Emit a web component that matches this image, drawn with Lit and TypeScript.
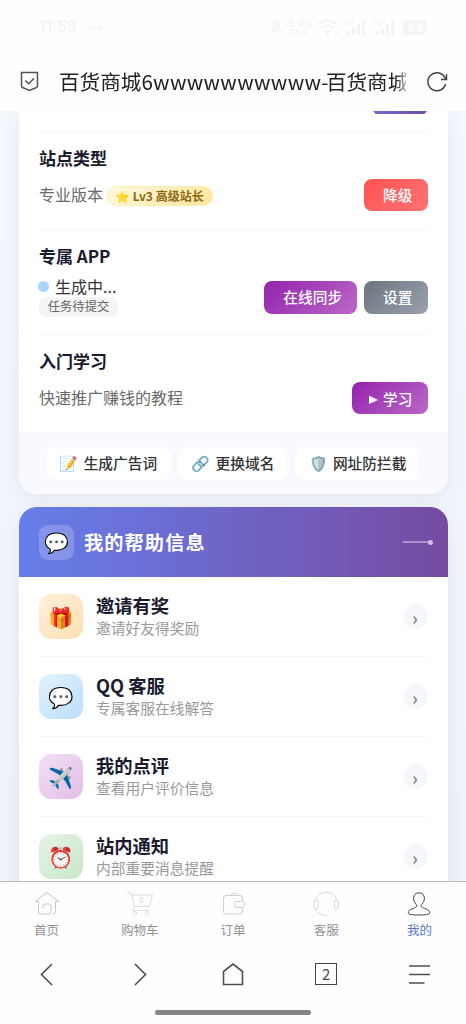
import { LitElement, html, svg, css } from "lit";
import { customElement, property } from "lit/decorators.js";

interface HelpItem {
  icon: string;
  tone: string;
  title: string;
  desc: string;
}

const helpItems: HelpItem[] = [
  { icon: "🎁", tone: "orange", title: "邀请有奖", desc: "邀请好友得奖励" },
  { icon: "💬", tone: "blue", title: "QQ 客服", desc: "专属客服在线解答" },
  { icon: "✈️", tone: "purple", title: "我的点评", desc: "查看用户评价信息" },
  { icon: "⏰", tone: "green", title: "站内通知", desc: "内部重要消息提醒" },
];

const tabs = [
  {
    label: "首页",
    cls: "home",
    art: svg`<path d="M4.500 10.500H1.200L13 1.500l11.800 9h-3.300M4.500 10.500v10q0 2.500 2.500 2.500h7.500q2.500 0 2.500-2.500v-5q0-2.500-2.500-2.500h-3q-2.500 0-2.500 2.500v1.500M21.500 10.500V20q0 2.700-2.200 3"/>`,
  },
  {
    label: "购物车",
    cls: "cart",
    art: svg`<path d="M0 1.500h3.200q1.200 0 1.500 1.500l2.500 12.500h15.500L25.500 4H5M7.200 15.500 5.500 19.500h17M13 6.500h2.500v5H13zM13.500 13.500h1.500"/><circle cx="8" cy="22.300" r="1.700"/><circle cx="20" cy="22.300" r="1.700"/>`,
  },
  {
    label: "订单",
    cls: "order",
    art: svg`<path d="M22.500 10.500V7q0-2.500-2.500-2.500H6Q3.500 4.500 3.500 7v13.500Q3.500 23 6 23h14q2.500 0 2.500-2.500V16.500M10 4.500l3-1.900q1.500-.8 3 0l2.500 1.900M15 10.500h7.500l2 1.500v3l-2 1.500H15z"/>`,
  },
  {
    label: "客服",
    cls: "service",
    art: svg`<path d="M2.500 9.500C4 4 8 1.200 13.300 1.200S22.500 4 24 9.500M2.500 17.500c1.500 4.700 6 7.200 12 6.800"/><rect x="1" y="9" width="4" height="9" rx="2"/><rect x="21.500" y="9" width="4" height="9" rx="2"/>`,
  },
  {
    label: "我的",
    cls: "mine",
    art: svg`<path d="M13 1.800C9.500 1.800 7.600 4.300 7.600 7.200c0 2.500 1 4.700 2.700 6.200 1.400 1.300.8 2.300-.8 3.100-2.700 1.300-7.200 2.100-7.200 5.300 0 1.600 4 2.200 10.700 2.200s10.700-.6 10.700-2.200c0-3.200-4.500-4-7.200-5.300-1.600-.8-2.200-1.800-.8-3.100 1.700-1.500 2.700-3.700 2.700-6.200 0-2.900-1.900-5.400-5.400-5.400z"/>`,
  },
];

const fontStack = css`"Noto Sans CJK SC", "Noto Sans", "Noto Color Emoji", sans-serif`;

@customElement("help-row")
class HelpRow extends LitElement {
  @property({ attribute: false }) item!: HelpItem;

  static styles = css`
    :host {
      display: block;
      margin: 0 20px;
    }
    .row {
      display: flex;
      align-items: center;
      height: 79px;
      border-bottom: 1px solid #f7f7f9;
    }
    .icon {
      width: 44px;
      height: 45px;
      border-radius: 12px;
      display: grid;
      place-items: center;
      font-size: 20.500px;
      line-height: 1;
      margin-right: 13px;
    }
    .orange { background: linear-gradient(135deg, #fff0dc, #ffe0b2); }
    .blue { background: linear-gradient(135deg, #e3f2fd, #bbdefb); }
    .purple { background: linear-gradient(135deg, #f3e0f5, #e1bee7); }
    .green { background: linear-gradient(135deg, #e6f4e7, #c8e6c9); }
    .text { flex: 1; padding-bottom: 1px; }
    .title {
      font-size: 18.300px;
      font-weight: 600;
      line-height: 23px;
      color: #1a1a2e;
    }
    .desc {
      font-size: 14.750px;
      line-height: 21px;
      color: #999;
    }
    .go {
      width: 25px;
      height: 25px;
      border-radius: 50%;
      background: #f5f7fa;
      display: grid;
      place-items: center;
      color: #8c8c92;
      font-size: 18px;
      line-height: 24px;
      font-weight: 700;
    }
  `;

  render() {
    const { icon, tone, title, desc } = this.item;
    return html`
      <div class="row">
        <div class="icon ${tone}">${icon}</div>
        <div class="text">
          <div class="title">${title}</div>
          <div class="desc">${desc}</div>
        </div>
        <div class="go">›</div>
      </div>
    `;
  }
}

@customElement("app-root")
class AppRoot extends LitElement {
  static styles = css`
    :host {
      display: flex;
      flex-direction: column;
      width: 466px;
      height: 1024px;
      overflow: hidden;
      background: #fefefe;
      font-family: ${fontStack};
      color: #333;
    }
    * { box-sizing: border-box; }
    svg { display: block; fill: none; }
    .status {
      height: 52px;
      padding: 2px 36px 0 39px;
      display: flex;
      align-items: center;
      color: #f4f4f4;
      font: 600 15.500px/20px "Inter", sans-serif;
    }
    .status .dots { font-size: 9px; margin-left: 12px; flex: 1; }
    .status svg { fill: currentColor; }
    .address {
      height: 59px;
      padding: 0 18px 0 20px;
      display: flex;
      align-items: center;
      color: #222;
    }
    .url {
      margin-left: 20px;
      width: 347px;
      font-size: 20.600px;
      line-height: 30px;
      padding-bottom: 1px;
      white-space: nowrap;
      overflow: hidden;
      margin-right: 19.500px;
      -webkit-mask-image: linear-gradient(90deg, #000 97%, rgba(0, 0, 0, 0.3));
    }
    .url .latin { letter-spacing: 0.300px; }
    .url .dash { letter-spacing: -2.500px; }
    .page {
      height: 770px;
      overflow: hidden;
      padding: 0 18.500px 0 19px;
      background: linear-gradient(180deg, #f4f7fc, #eff2f8);
      display: flex;
      flex-direction: column;
      gap: 13px;
    }
    .card {
      flex: none;
      background: #fff;
      overflow: hidden;
      box-shadow: 0 4px 20px rgba(30, 40, 70, 0.06);
    }
    .site { border-radius: 0 0 18px 18px; height: 383px; }
    .help { border-radius: 18px 18px 0 0; height: 500px; }
    .line {
      margin: 0 20px;
      border-bottom: 1px solid #f7f7f9;
      display: flex;
      flex-direction: column;
    }
    .first { height: 21px; align-items: flex-end; }
    .clip { height: 3px; overflow: hidden; }
    .clip .btn { margin-top: -29px; width: 55.500px; }
    .kind { height: 98px; padding-top: 13px; }
    .app { height: 105px; padding-top: 13px; }
    .learn { height: 97px; padding-top: 13px; border: 0; }
    .name {
      font-size: 17px;
      line-height: 26px;
      font-weight: 600;
      color: #1a1a2e;
    }
    .body {
      display: flex;
      align-items: center;
      justify-content: space-between;
    }
    .kind .body { height: 32px; margin-top: 8px; }
    .app .body { height: 43px; margin-top: 7px; }
    .learn .body { height: 32px; margin-top: 8px; }
    .desc {
      font-size: 16px;
      line-height: 24px;
      padding-bottom: 2px;
      color: #6a6a6a;
      display: flex;
      align-items: center;
    }
    .badge {
      height: 20px;
      margin: 3px 0 0 4px;
      padding: 0 8px 0 7px;
      border-radius: 10px;
      border: 1px solid #ffecb3;
      background: linear-gradient(135deg, #fff8e1, #ffe69a);
      color: #8b6914;
      font-size: 12px;
      font-weight: 600;
      line-height: 17px;
      white-space: pre;
    }
    .facts { padding-bottom: 3px; }
    .state {
      display: flex;
      align-items: center;
      font-size: 16px;
      line-height: 22px;
      color: #333;
    }
    .dot {
      width: 11px;
      height: 11px;
      border-radius: 50%;
      background: #a9d4fd;
      margin: 0 6px 0 -1px;
    }
    .tag {
      width: 79px;
      height: 20px;
      border-radius: 7px;
      background: #f5f5f5;
      color: #666;
      font-size: 12.300px;
      line-height: 19px;
      text-align: center;
    }
    .btns { display: flex; gap: 7px; }
    .btn {
      height: 32.500px;
      border-radius: 8px;
      padding: 0 15px 0 19px;
      color: #fff;
      font-size: 14.700px;
      font-weight: 500;
      line-height: 31px;
      white-space: nowrap;
    }
    .red { background: linear-gradient(135deg, #ff5252, #ff7373); }
    .violet { background: linear-gradient(135deg, #9323ac, #ba68c8); }
    .gray { background: linear-gradient(135deg, #6c757d, #9aa1ae); }
    .indigo { background: linear-gradient(135deg, #667eea, #764ba2); }
    .play { display: flex; align-items: center; padding-left: 17px; gap: 5px; }
    .play svg { margin-top: 2px; }
    .quick {
      height: 62px;
      background: #f8faff;
      display: flex;
      align-items: center;
      justify-content: center;
      gap: 4px;
    }
    .chip {
      height: 33px;
      border-radius: 9px;
      background: #fff;
      display: flex;
      align-items: center;
      gap: 6px;
      padding: 0 13px 2px 12.500px;
      font-size: 14.700px;
      font-weight: 500;
      color: #333;
      white-space: nowrap;
    }
    .chip .emo { font-size: 15px; width: 18px; line-height: 20px; padding-top: 1px; }
    .sep { width: 1px; height: 17px; background: #eaeef6; }
    .head {
      height: 70px;
      background: linear-gradient(90deg, #667eea, #764ba2);
      padding: 0 15px 0 20px;
      display: flex;
      align-items: center;
      color: #fff;
    }
    .bubble {
      width: 35px;
      height: 35px;
      border-radius: 9px;
      background: rgba(255, 255, 255, 0.2);
      display: grid;
      place-items: center;
      font-size: 20px;
      line-height: 1;
      padding-bottom: 1px;
    }
    .head h2 {
      flex: 1;
      margin: 0 0 0 10px;
      font-size: 19.200px;
      line-height: 28px;
      letter-spacing: 1.100px;
      font-weight: 700;
    }
    .rule { width: 26px; height: 2px; background: rgba(255, 255, 255, 0.4); }
    .knob { width: 5px; height: 5px; border-radius: 50%; background: #d4c0e6; margin-left: -1px; }
    .tabs {
      height: 61px;
      border-top: 1px solid #bcbcbc;
      display: grid;
      grid-template-columns: repeat(5, 1fr);
    }
    .tab {
      padding-top: 9px;
      display: flex;
      flex-direction: column;
      align-items: center;
      font-size: 12.500px;
      line-height: 18px;
      gap: 4px;
      color: #929292;
    }
    .tab svg { stroke: #c6c6c6; }
    .tab .cart { stroke: #dedede; }
    .tab .order { stroke: #cfcfcf; }
    .tab .service { stroke: #d8d8d8; }
    .tab .mine { stroke: #444; }
    .tab.on { color: #5b74cf; }
    .browser {
      height: 63px;
      display: grid;
      grid-template-columns: repeat(5, 1fr);
      place-items: center;
    }
    .browser svg { stroke: #505050; stroke-width: 1.600; }
    .count {
      width: 22px;
      height: 22px;
      border: 1.500px solid #444;
      font-size: 15px;
      line-height: 19px;
      text-align: center;
      color: #505050;
    }
    .pill {
      width: 156px;
      height: 5px;
      border-radius: 3px;
      background: #858585;
      margin: 4.500px auto 0 155px;
    }
  `;

  render() {
    return html`
      <div class="status">
        <span>11:59</span><span class="dots">•••</span>
        <svg width="162" height="20" viewBox="0 0 162 20">
          <path d="M2 14.500 4 12V8q0-4.500 4-5 4 .5 4 5v4l2 2.500zM6 16h4l-2 2z" />
          <path d="M1.500 3 15 17" stroke="#fefefe" stroke-width="3" />
          <path d="M1.500 2.500 15 16.500" stroke="currentColor" stroke-width="1.300" />
          <text x="19" y="10" font-size="10.500" textLength="25">3.00</text>
          <text x="22" y="18" font-size="7">KB/S</text>
          <g fill="none" stroke="currentColor" stroke-width="2.200">
            <path d="M50 7q9.500-7 19 0M53 11q6.500-5 13 0M56.500 14.500q3-2 6 0" />
          </g>
          <circle cx="59.500" cy="17" r="1.700" /><circle cx="68.500" cy="16" r="1.500" />
          <text x="76" y="8" font-size="7">5G</text>
          <path d="M79 14h3v4h-3zM84 11h3v7h-3zM89 7h3v11h-3zM94 3h3v15h-3z" />
          <text x="105" y="8" font-size="7">5G</text>
          <path d="M108 14h3v4h-3zM113 11h3v7h-3zM118 7h3v11h-3zM123 3h3v15h-3z" />
          <rect x="135" y="3" width="23" height="15" rx="4" /><rect x="158.500" y="8" width="1.500" height="5" />
          <text x="139.500" y="15" font-size="12" font-weight="700" style="fill:#fefefe">84</text>
        </svg>
      </div>

      <div class="address">
        <svg width="19" height="21" viewBox="0 0 19 21" stroke="#555" stroke-width="1.500">
          <path d="M1.500 1.500h16v13.500q0 1-1 1.500l-7 3-7-3q-1-.5-1-1.500z" />
          <path d="m5.200 9.500 3.500 3.200 5.300-5.500" />
        </svg>
        <div class="url">百货商城<span class="latin">6wwwwwwwwww</span><span class="dash">-</span>百货商城</div>
        <svg width="22" height="22" viewBox="0 0 22 22" stroke="#444" stroke-width="1.500">
          <path d="M19.600 13A9 9 0 1 1 18.500 6L20 8M20.500 3v5.500h-5.500" />
        </svg>
      </div>

      <div class="page">
        <section class="card site">
          <div class="line first"><div class="clip"><div class="btn indigo"></div></div></div>
          <div class="line kind">
            <div class="name">站点类型</div>
            <div class="body">
              <div class="desc">专业版本<span class="badge">⭐ Lv3 高级站长</span></div>
              <div class="btn red">降级</div>
            </div>
          </div>
          <div class="line app">
            <div class="name">专属 APP</div>
            <div class="body">
              <div class="facts">
                <div class="state"><i class="dot"></i>生成中...</div>
                <div class="tag">任务待提交</div>
              </div>
              <div class="btns">
                <div class="btn violet">在线同步</div>
                <div class="btn gray">设置</div>
              </div>
            </div>
          </div>
          <div class="line learn">
            <div class="name">入门学习</div>
            <div class="body">
              <div class="desc">快速推广赚钱的教程</div>
              <div class="btn violet play">
                <svg width="9" height="9" viewBox="0 0 9 9"><path d="M0 .5 9 5 0 9z" fill="#fff" /></svg>
                <span>学习</span>
              </div>
            </div>
          </div>
          <div class="quick">
            <div class="chip"><span class="emo">📝</span>生成广告词</div>
            <i class="sep"></i>
            <div class="chip"><span class="emo">🔗</span>更换域名</div>
            <i class="sep"></i>
            <div class="chip"><span class="emo">🛡️</span>网址防拦截</div>
          </div>
        </section>

        <section class="card help">
          <div class="head">
            <div class="bubble">💬</div>
            <h2>我的帮助信息</h2>
            <i class="rule"></i><i class="knob"></i>
          </div>
          ${helpItems.map((item) => html`<help-row .item=${item}></help-row>`)}
        </section>
      </div>

      <nav class="tabs">
        ${tabs.map(
          (t) => html`
            <div class="tab ${t.cls === "mine" ? "on" : ""}">
              <svg class=${t.cls} width="26" height="26" viewBox="0 0 26 26">${t.art}</svg>
              <span>${t.label}</span>
            </div>
          `
        )}
      </nav>

      <div class="browser">
        <svg width="24" height="24" viewBox="0 0 24 24"><path d="M17 2 6.500 12.500 17 23" /></svg>
        <svg width="24" height="24" viewBox="0 0 24 24"><path d="M7 2l10.500 10.500L7 23" /></svg>
        <svg width="24" height="24" viewBox="0 0 24 24"><path d="M2.500 9.500 12 2l9.500 7.500v13h-19z" /></svg>
        <div class="count">2</div>
        <svg width="24" height="24" viewBox="0 0 24 24"><path d="M2 4h21M2 12.500h21M2 21h15.500" /></svg>
      </div>
      <div class="pill"></div>
    `;
  }
}
